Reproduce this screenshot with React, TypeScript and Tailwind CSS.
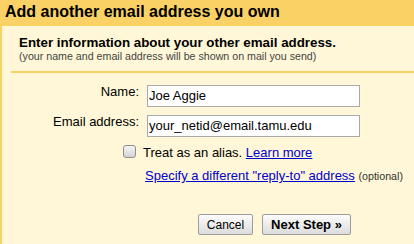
function TextBox({ value }: { value: string }) {
  return (
    <div className="h-[22px] border border-[#a9a9a9] bg-white px-[1px] text-[13px] leading-[20px] whitespace-nowrap text-black">
      {value}
    </div>
  );
}

export default function App() {
  return (
    <div className="w-[414px] h-[244px] overflow-hidden bg-[#fff7d7] font-['Liberation_Sans',Arial,sans-serif] text-black">
      <div className="h-[26px] bg-[#fad165] pl-[5px] text-[16px] font-bold leading-[24px]">
        Add another email address you own
      </div>
      <div className="h-[218px] border-l-2 border-[#fad165]">
        <div className="pl-[17px] pt-[9px]">
          <div className="text-[13.33px] font-bold leading-[15px]">
            Enter information about your other email address.
          </div>
          <div className="text-[10.67px] leading-[12px] text-[#444]">
            (your name and email address will be shown on mail you send)
          </div>
        </div>
        <div className="ml-[9px] mt-[9px] h-[2px] bg-[#fad165]" />

        <div className="mt-[12px] grid grid-cols-[137px_213px] gap-x-[8px] gap-y-[8px] text-[13px]">
          <label className="self-start text-right leading-[13px]">Name:</label>
          <TextBox value="Joe Aggie" />
          <label className="self-start text-right leading-[13px]">Email address:</label>
          <TextBox value="your_netid@email.tamu.edu" />
        </div>

        <div className="mt-[8px] flex items-start pl-[121px] text-[13px] leading-[13px]">
          <span className="h-[13px] w-[13px] rounded-[3px] border border-[#8e8e8e] bg-gradient-to-b from-[#f6f6f6] to-[#d4d4d4]" />
          <span className="ml-[7px] mt-[1px]">
            Treat as an alias.{" "}
            <a href="#" className="text-[#0000cc] underline">
              Learn more
            </a>
          </span>
        </div>

        <div className="mt-[10px] pl-[143px] text-[13px] leading-[13px]">
          <a href="#" className="text-[#0000cc] underline">
            Specify a different "reply-to" address
          </a>{" "}
          <span className="text-[10.67px] text-[#333]">(optional)</span>
        </div>

        <div className="mt-[31px] flex gap-[9px] pl-[196px]">
          <button className="flex h-[21px] w-[55px] items-center justify-center rounded-[2px] border border-[#9c9c9c] bg-gradient-to-b from-[#fcfcfc] to-[#dcdcdc] text-[12px] text-black">
            Cancel
          </button>
          <button className="flex h-[21px] w-[89px] items-center justify-center rounded-[2px] border border-[#9c9c9c] bg-gradient-to-b from-[#fcfcfc] to-[#dcdcdc] text-[13px] font-bold text-black">
            Next Step »
          </button>
        </div>
      </div>
    </div>
  );
}
